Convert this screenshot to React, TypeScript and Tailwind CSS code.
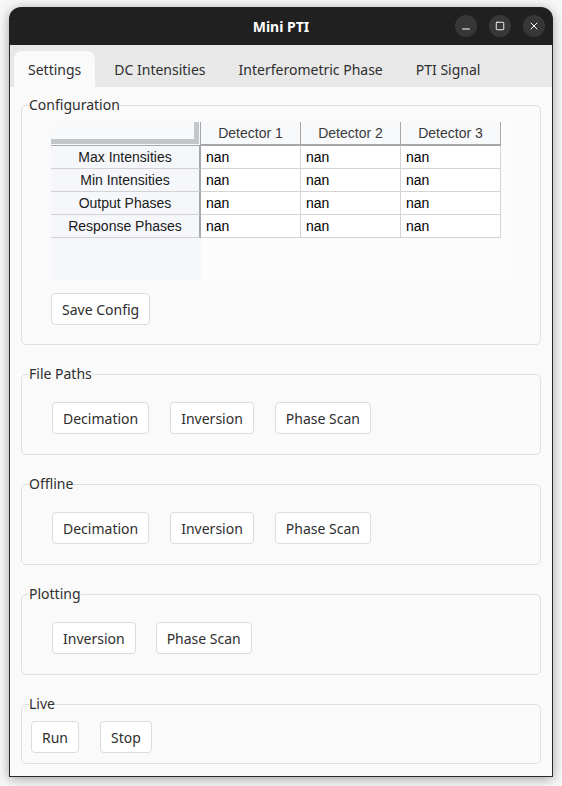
import { Minus, Square, X } from "lucide-react";

const ui = { fontFamily: '"Noto Sans", "Open Sans", sans-serif' };
const tableFont = { fontFamily: '"Liberation Sans", Arial, sans-serif' };

const tabs = ["Settings", "DC Intensities", "Interferometric Phase", "PTI Signal"];
const rowLabels = ["Max Intensities", "Min Intensities", "Output Phases", "Response Phases"];
const detectors = ["Detector 1", "Detector 2", "Detector 3"];

function Button({ label }: { label: string }) {
  return (
    <button
      type="button"
      className="h-[32px] rounded-[4px] border border-[#dcdcdc] bg-white px-[10px] text-[14px] text-[#2e2e2e]"
    >
      {label}
    </button>
  );
}

function Group({
  title,
  children,
  className,
}: {
  title: string;
  children: React.ReactNode;
  className: string;
}) {
  return (
    <fieldset className="rounded-[5px] border border-[#e0e0e0]">
      <legend className="ml-[7px] text-[14px] leading-[18px] text-[#2e2e2e]">{title}</legend>
      <div className={className}>{children}</div>
    </fieldset>
  );
}

function ConfigTable() {
  return (
    <div className="flex h-[159px] w-[460px] bg-[#fcfcfc]" style={tableFont}>
      <div className="w-[150px] bg-[#f5f7fa]">
        <div className="h-[24px] border-b border-r border-[#a4a8ac] bg-[#f8f9fa] pb-px pr-px">
          <div className="h-full border-b-[5px] border-r-[5px] border-[#c3c7cc]" />
        </div>
        {rowLabels.map((r) => (
          <div
            key={r}
            className="flex h-[23px] items-center justify-center border-b border-r-2 border-b-[#d2d2d2] border-r-[#a4a8ac] text-[14px] text-[#1a1a1a]"
          >
            {r}
          </div>
        ))}
      </div>
      <div>
        <div className="flex h-[24px] border-b-2 border-[#a4a8ac] bg-[#f8f9fb]">
          {detectors.map((d) => (
            <div
              key={d}
              className="flex w-[100px] items-center justify-center border-r border-[#a8a8a8] text-[14px] text-[#3a3a3a]"
            >
              {d}
            </div>
          ))}
        </div>
        {rowLabels.map((r) => (
          <div key={r} className="flex h-[23px]">
            {detectors.map((d) => (
              <div
                key={d}
                className="flex w-[100px] items-center border-b border-r border-[#d4d4d4] bg-white pl-[5px] text-[14px] text-black"
              >
                nan
              </div>
            ))}
          </div>
        ))}
      </div>
    </div>
  );
}

export default function App() {
  return (
    <div className="h-[786px] w-[562px] bg-[#f7f7f7] pl-[9px] pt-[7px]" style={ui}>
      <div className="flex h-[770px] w-[544px] flex-col rounded-t-[12px] shadow-[0_2px_12px_rgba(0,0,0,0.35)]">
        <div className="relative flex h-[38px] shrink-0 items-center justify-center rounded-t-[12px] bg-[#202020]">
          <span className="text-[14px] font-bold text-white">Mini PTI</span>
          <div className="absolute right-[8px] top-[8px] flex gap-[12px]">
            <span className="flex h-[22px] w-[22px] items-center justify-center rounded-full bg-[#373737] text-white">
              <Minus size={12} strokeWidth={2} className="translate-y-[3px]" />
            </span>
            <span className="flex h-[22px] w-[22px] items-center justify-center rounded-full bg-[#373737] text-white">
              <Square size={10} strokeWidth={2.2} />
            </span>
            <span className="flex h-[22px] w-[22px] items-center justify-center rounded-full bg-[#373737] text-white">
              <X size={12} strokeWidth={2} />
            </span>
          </div>
        </div>

        <div className="flex flex-1 flex-col border-x border-b border-[#2a2a2a] bg-[#fafafa]">
          <div className="flex h-[42px] shrink-0 items-end gap-[5px] bg-[#e8e8e8] pl-[4px]">
            {tabs.map((t, i) => (
              <div
                key={t}
                className={`flex h-[36px] items-center rounded-t-[8px] px-[14px] text-[14px] text-[#2e2e2e] ${
                  i === 0 ? "bg-[#fafafa]" : ""
                }`}
              >
                {t}
              </div>
            ))}
          </div>

          <div className="flex flex-col gap-[20px] px-[11px] pt-[9px]">
            <Group title="Configuration" className="pl-[29px] pt-[8px] pb-[19px]">
              <ConfigTable />
              <div className="mt-[12px]">
                <Button label="Save Config" />
              </div>
            </Group>

            <Group title="File Paths" className="flex gap-[21px] pl-[30px] pt-[19px] pb-[20px]">
              <Button label="Decimation" />
              <Button label="Inversion" />
              <Button label="Phase Scan" />
            </Group>

            <Group title="Offline" className="flex gap-[21px] pl-[30px] pt-[19px] pb-[20px]">
              <Button label="Decimation" />
              <Button label="Inversion" />
              <Button label="Phase Scan" />
            </Group>

            <Group title="Plotting" className="flex gap-[20px] pl-[30px] pt-[19px] pb-[20px]">
              <Button label="Inversion" />
              <Button label="Phase Scan" />
            </Group>

            <Group title="Live" className="flex gap-[21px] pl-[9px] pt-[8px] pb-[10px]">
              <Button label="Run" />
              <Button label="Stop" />
            </Group>
          </div>
        </div>
      </div>
    </div>
  );
}
